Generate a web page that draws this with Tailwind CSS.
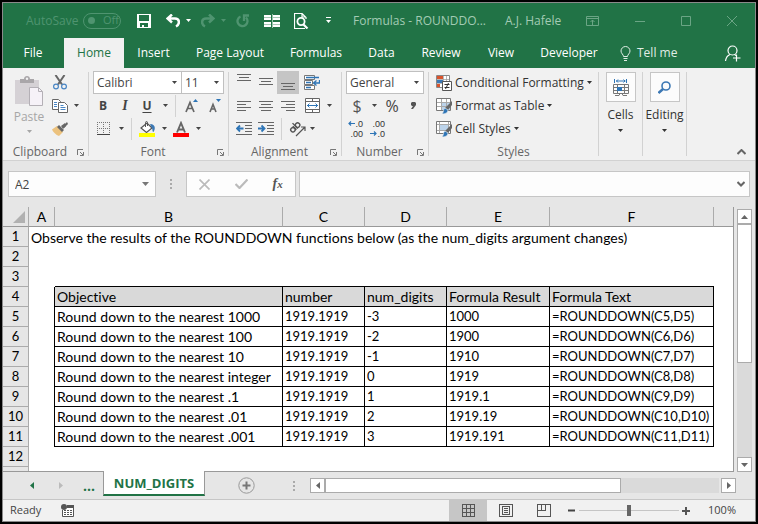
<!DOCTYPE html>
<html lang="en">
<head>
<meta charset="utf-8">
<meta name="viewport" content="width=device-width, initial-scale=1">
<title>Formulas - ROUNDDOWN</title>
<script src="https://cdn.jsdelivr.net/npm/@tailwindcss/browser@4"></script>
</head>
<body class="bg-black font-['Open_Sans','Noto_Sans',sans-serif] text-xs text-[#444]">
<svg class="hidden" aria-hidden="true">
  <symbol id="caret" viewBox="0 0 5 3"><path d="M0 0h5L2.500 3z" fill="currentColor"/></symbol>
  <symbol id="launch" viewBox="0 0 7 7"><path d="M.5 6V.5H6M3 3l3 3M6.500 3v3.500H3" fill="none" stroke="#777"/></symbol>
  <symbol id="tablebrush" viewBox="0 0 16 16">
    <path d="M.5.5h14v12H.5z" fill="#fff" stroke="#777"/><path d="M5 4h9v8H5z" fill="#bcd3ea"/>
    <path d="M1 4.500h13M1 8.500h13M5.500 1v11M10.500 1v11" stroke="#a8a8a8"/>
    <path d="M16 3v4l-4 5-3-2z" fill="#666"/><path d="M9 10l3 2c0 3-3 4-6 4 2-2 1-5 3-6z" fill="#2e75b6" stroke="#f1f1f1" stroke-width=".6"/>
  </symbol>
  <symbol id="cellbrush" viewBox="0 0 16 16">
    <path d="M.5.5h14v12H.5z" fill="#fff" stroke="#777"/><path d="M4 4h8v5H4z" fill="#bcd3ea"/>
    <path d="M1 3.500h13M1 9.500h13M3.500 1v11M12.500 1v11" stroke="#a8a8a8"/>
    <path d="M16 3v4l-4 5-3-2z" fill="#666"/><path d="M9 10l3 2c0 3-3 4-6 4 2-2 1-5 3-6z" fill="#2e75b6" stroke="#f1f1f1" stroke-width=".6"/>
  </symbol>
</svg>

<div class="flex min-h-screen flex-col border-2 border-black">
<div class="flex flex-1 flex-col border border-[#8a8a8a]">

<header class="bg-[#217346] text-white">
  <div class="flex h-[35px] items-center pr-[18px] pl-[23px]">
    <label for="autosave" class="w-[57px] text-[#4f9470]">AutoSave</label>
    <button id="autosave" type="button" class="flex h-4 w-[38px] items-center gap-2 rounded-full border border-[#4f9470] pl-1 text-[11px] text-[#4f9470]"><span class="size-[7px] rounded-full bg-[#4f9470]"></span>Off</button>
    <button type="button" aria-label="Save" class="ml-4"><svg class="block h-[14px] w-[14px]" viewBox="0 0 14 14"><path d="M0 0h14v14H0zM2 1v6h10V1zM3 9v4h2v-2h2v2h4V9z" fill="#fff" fill-rule="evenodd"/></svg></button>
    <button type="button" aria-label="Undo" class="ml-[15px]"><svg class="block h-[14px] w-[14px]" viewBox="0 0 14 14"><path d="M6 .5L1.500 4.500 6 8.500M2 4.500h7c5 0 5 6 1 8" fill="none" stroke="#fff" stroke-width="2.500"/></svg></button>
    <button type="button" aria-label="Undo list" class="ml-[6px]"><svg class="block h-[3px] w-[5px]"><use href="#caret"/></svg></button>
    <button type="button" aria-label="Redo" class="ml-[10px] text-[#4f9470]"><svg class="block h-[14px] w-[14px]" viewBox="0 0 14 14"><path d="M8 .5l4.500 4L8 8.500M12 4.500H5c-5 0-5 6-1 8" fill="none" stroke="currentColor" stroke-width="2.500"/></svg></button>
    <button type="button" aria-label="Redo list" class="ml-[6px] text-[#4f9470]"><svg class="block h-[3px] w-[5px]"><use href="#caret"/></svg></button>
    <button type="button" aria-label="Repeat" class="ml-[10px] text-[#4f9470]"><svg class="block h-[14px] w-[14px]" viewBox="0 0 14 14"><path d="M4.500 2.500a5 5 0 1 0 5.500 1M8 7V1.500h5" fill="none" stroke="currentColor" stroke-width="2.300"/></svg></button>
    <button type="button" aria-label="Freeze panes" class="ml-[14px]"><svg class="block h-[14px] w-4" viewBox="0 0 16 14" shape-rendering="crispEdges"><path d="M0 1h7v5H0zM9 1h7v5H9zM0 8h7v5H0zM9 8h7v5H9z" fill="#fff"/><path d="M0 3.500h16M0 10.500h16" stroke="#217346" stroke-width=".4"/><path d="M8 0v14" stroke="#9cc5ad"/></svg></button>
    <button type="button" aria-label="Print preview" class="ml-[14px]"><svg class="block h-4 w-[15px]" viewBox="0 0 15 16"><path d="M11 15.500H.5V.5H8l4 4V6M8 .5V4h4" fill="none" stroke="#fff" stroke-width="1.200"/><circle cx="7" cy="8.500" r="3.600" fill="#217346" stroke="#fff" stroke-width="1.800"/><path d="M9.500 11.500l4 4" stroke="#fff" stroke-width="2.200"/></svg></button>
    <button type="button" aria-label="Customize toolbar" class="ml-[17px]"><svg class="block h-[7px] w-[5px]" viewBox="0 0 5 7"><path d="M0 0h5v1H0zM0 3h5L2.500 6z" fill="#fff"/></svg></button>
    <h1 class="ml-[22px] min-w-[152px] flex-1 whitespace-nowrap text-[#a3cbb4]">Formulas - ROUNDDO...</h1>
    <button type="button" class="w-[81px] text-left whitespace-nowrap text-[#a3cbb4]">A.J. Hafele</button>
    <div class="flex items-center gap-9 text-[#6ba585]">
      <button type="button" aria-label="Ribbon display options"><svg class="block h-[10px] w-[13px]" viewBox="0 0 13 10" fill="none" stroke="currentColor"><path d="M.5.5h12v9H.5zM1 2.500h11M6.500 9V4M4.500 6l2-2 2 2"/></svg></button>
      <button type="button" aria-label="Minimize"><svg class="block size-[10px]" viewBox="0 0 10 10"><path d="M0 5.500h10" stroke="currentColor"/></svg></button>
      <button type="button" aria-label="Maximize"><svg class="block size-[10px]" viewBox="0 0 10 10"><path d="M.5.5h9v9h-9z" fill="none" stroke="currentColor"/></svg></button>
      <button type="button" aria-label="Close"><svg class="block size-[10px]" viewBox="0 0 10 10"><path d="M0 0l10 10M10 0L0 10" stroke="currentColor"/></svg></button>
    </div>
  </div>
  <nav class="flex h-[30px] items-stretch whitespace-nowrap">
    <button type="button" class="w-[60px]">File</button>
    <button type="button" class="ml-px w-[60px] bg-[#f1f1f1] text-[#217346]">Home</button>
    <button type="button" class="w-[59px]">Insert</button>
    <button type="button" class="w-[94px]">Page Layout</button>
    <button type="button" class="w-[78px]">Formulas</button>
    <button type="button" class="w-[53px]">Data</button>
    <button type="button" class="w-[66px]">Review</button>
    <button type="button" class="w-[54px]">View</button>
    <button type="button" class="w-[82px]">Developer</button>
    <button type="button" class="flex items-center gap-[6px] pl-[10px] text-[#e0ede5]"><svg class="h-[15px] w-[11px]" viewBox="0 0 11 15" fill="none" stroke="currentColor"><path d="M3.500 10.500c0-2-2.500-3-2.500-5.500a4.500 4.500 0 0 1 9 0c0 2.500-2.500 3.500-2.500 5.500zM3.500 12.500h4M4 14.500h3"/></svg>Tell me</button>
    <button type="button" aria-label="Share" class="ml-auto pr-[14px]"><svg class="h-[17px] w-4" viewBox="0 0 16 17" fill="none" stroke="#fff" stroke-width="1.200"><circle cx="7.500" cy="5.500" r="4.500"/><path d="M.5 16c.5-4 2-5.500 4.500-6.500M9.500 9.500l1.500 1M11.500 9.500v7M8 13h7.500"/></svg></button>
  </nav>
</header>

<section aria-label="Ribbon" class="flex h-[93px] border-b border-[#d2d2d2] bg-[#f1f1f1] pt-[3px]">
  <div class="flex w-[85px] flex-col">
    <div class="flex h-[69px]">
      <button type="button" class="ml-[11px] flex w-[30px] flex-col items-center pt-[5px] text-[#a6a6a6]">
        <svg class="h-[30px] w-7" viewBox="0 0 28 30"><path d="M0 4h24v24H0z" fill="#d5d1d5"/><path d="M5 7V3h4c0-4 6-4 6 0h4v4z" fill="#a9a6a9"/><circle cx="12" cy="2.800" r="1.200" fill="#f1f1f1"/><path d="M14.500 11.500h9l4 4v14h-13z" fill="#f6f2f8" stroke="#b4b0b6"/><path d="M23.500 11.500v4h4" fill="none" stroke="#b4b0b6"/></svg>
        <span class="mt-[2px] leading-[18px]">Paste</span>
        <svg class="mt-1 h-[3px] w-[5px]"><use href="#caret"/></svg>
      </button>
      <div class="ml-[5px] flex flex-col">
        <button type="button" aria-label="Cut" class="flex h-[23px] w-[22px] items-center justify-center"><svg class="h-[15px] w-[14px]" viewBox="0 0 14 15" fill="none"><path d="M2.500 0L9 9.500M11.500 0L5 9.500" stroke="#666" stroke-width="2"/><circle cx="3" cy="11.500" r="2.400" stroke="#4a86c4" stroke-width="1.200"/><circle cx="11" cy="11.500" r="2.400" stroke="#4a86c4" stroke-width="1.200"/></svg></button>
        <div class="flex h-[23px] items-center">
          <button type="button" aria-label="Copy" class="flex w-[22px] justify-center"><svg class="h-[14px] w-4" viewBox="0 0 16 14" fill="#fff" stroke="#666"><path d="M.5.5h6l2 2v8h-8z"/><path d="M2 3.500h3M2 5.500h3M2 7.500h3" stroke="#4a86c4"/><path d="M6.500 3.500h6l3 3v7h-9z"/><path d="M8.500 6.500h3M8.500 8.500h5M8.500 10.500h5" stroke="#4a86c4"/></svg></button>
          <button type="button" aria-label="Copy options" class="ml-[3px]"><svg class="block h-[3px] w-[5px]"><use href="#caret"/></svg></button>
        </div>
        <button type="button" aria-label="Format painter" class="flex h-[23px] w-[22px] items-center justify-center"><svg class="h-[14px] w-4" viewBox="0 0 16 14"><path d="M5 4l6 6-4 4C4 13 1 10 0 7.500z" fill="#ecc27e"/><path d="M7 3l5 5-2 2-5-5zM11 4l4-4 1 2-4 4z" fill="#666"/><path d="M9 4l4-3 1 3-3 3z" fill="#666"/></svg></button>
      </div>
    </div>
    <div class="flex h-[20px] items-center pt-1"><span class="flex-1 text-center text-[#666]">Clipboard</span><button type="button" aria-label="Clipboard settings" class="w-[11px]"><svg class="block size-[7px]"><use href="#launch"/></svg></button></div>
  </div>

  <div class="my-[1px] mb-1 w-px bg-[#d2d2d2]"></div>
  <div class="flex w-[139px] flex-col">
    <div class="flex h-[23px] px-1">
      <div class="relative w-[89px]"><select aria-label="Font" class="h-full w-full appearance-none border border-[#c0c0c0] bg-white pl-[3px]"><option>Calibri</option></select><svg class="pointer-events-none absolute top-[10px] right-[5px] h-[3px] w-[5px]"><use href="#caret"/></svg></div>
      <div class="relative -ml-px w-[43px]"><select aria-label="Font size" class="h-full w-full appearance-none border border-[#c0c0c0] bg-white pl-[3px]"><option>11</option></select><svg class="pointer-events-none absolute top-[10px] right-[5px] h-[3px] w-[5px]"><use href="#caret"/></svg></div>
    </div>
    <div class="flex h-[23px] items-center pl-[3px]">
      <button type="button" class="w-[22px] font-bold">B</button>
      <button type="button" class="w-[22px] font-['Liberation_Serif',serif] text-sm font-bold italic">I</button>
      <button type="button" class="w-[22px] font-bold underline underline-offset-2">U</button>
      <button type="button" aria-label="Underline options" class="flex w-[14px] justify-center"><svg class="h-[3px] w-[5px]"><use href="#caret"/></svg></button>
      <div class="mx-[3px] h-[22px] w-px bg-[#d2d2d2]"></div>
      <button type="button" aria-label="Increase font size" class="flex w-[26px] justify-center"><svg class="h-[14px] w-[14px]" viewBox="0 0 14 14"><path d="M1 13L5 3.500 9 13M2.500 9.500h5" fill="none" stroke="#666" stroke-width="1.700"/><path d="M8 3h5L10.500 0z" fill="#2e75b6"/></svg></button>
      <button type="button" aria-label="Decrease font size" class="flex w-[20px] justify-center"><svg class="h-[14px] w-[14px]" viewBox="0 0 14 14"><path d="M2 13l3-7.500L8 13M3 10h4" fill="none" stroke="#666" stroke-width="1.600"/><path d="M8 0h5l-2.500 3z" fill="#2e75b6"/></svg></button>
    </div>
    <div class="flex h-[23px] items-center pl-[3px]">
      <button type="button" aria-label="Borders" class="flex w-[22px] justify-center"><svg class="h-[13px] w-[13px]" viewBox="0 0 13 13" shape-rendering="crispEdges"><path d="M0 .5h13M0 6.500h13M.5 0v12M6.500 0v12M12.500 0v12" fill="none" stroke="#777" stroke-dasharray="1 1"/><path d="M0 12.500h13" stroke="#444"/></svg></button>
      <button type="button" aria-label="Border options" class="flex w-[14px] justify-center"><svg class="h-[3px] w-[5px]"><use href="#caret"/></svg></button>
      <div class="mr-1 ml-[3px] h-[22px] w-px bg-[#d2d2d2]"></div>
      <button type="button" aria-label="Fill color" class="flex w-[22px] justify-center"><svg class="h-4 w-4" viewBox="0 0 16 16"><path d="M2 7l6-5 5 5-5.500 4.500z" fill="#fff" stroke="#555" stroke-width="1.200"/><path d="M6.500 6V1.500c0-1.300 2-1.300 2 0V5" fill="none" stroke="#555"/><path d="M11 3c5 0 6 4 3.500 8-1.500 0-.5-3-2-4.500z" fill="#3c78b4"/><path d="M0 12h16v4H0z" fill="#ff0"/></svg></button>
      <button type="button" aria-label="Fill options" class="flex w-[12px] justify-center"><svg class="h-[3px] w-[5px]"><use href="#caret"/></svg></button>
      <button type="button" aria-label="Font color" class="flex w-[22px] justify-center"><svg class="h-4 w-4" viewBox="0 0 16 16"><path d="M4 11.500L8 2l4 9.500M5.500 8.500h5" fill="none" stroke="#666" stroke-width="1.900"/><path d="M0 12h16v4H0z" fill="red"/></svg></button>
      <button type="button" aria-label="Font color options" class="flex w-[12px] justify-center"><svg class="h-[3px] w-[5px]"><use href="#caret"/></svg></button>
    </div>
    <div class="flex h-[20px] items-center pt-1"><span class="flex-1 text-center text-[#666]">Font</span><button type="button" aria-label="Font settings" class="w-[11px]"><svg class="block size-[7px]"><use href="#launch"/></svg></button></div>
  </div>

  <div class="my-[1px] mb-1 w-px bg-[#d2d2d2]"></div>
  <div class="flex w-[112px] flex-col">
    <div class="flex h-[23px] items-stretch pl-1">
      <button type="button" aria-label="Top align" class="flex w-[22px] justify-center pt-[3px]"><svg class="h-[15px] w-[14px]" viewBox="0 0 14 15" stroke="#666" shape-rendering="crispEdges"><path d="M0 .5h14M2 3.500h10M0 6.500h14"/></svg></button>
      <button type="button" aria-label="Middle align" class="flex w-[22px] justify-center pt-[3px]"><svg class="h-[15px] w-[14px]" viewBox="0 0 14 15" stroke="#666" shape-rendering="crispEdges"><path d="M0 4.500h14M2 7.500h10M0 10.500h14"/></svg></button>
      <button type="button" aria-label="Bottom align" class="flex w-[22px] justify-center bg-[#c5c5c5] pt-[4px]"><svg class="h-[16px] w-[14px]" viewBox="0 0 14 16" stroke="#666" shape-rendering="crispEdges"><path d="M0 8.500h14M2 11.500h10M0 14.500h14"/></svg></button>
      <button type="button" aria-label="Wrap text" class="ml-[2px] flex w-[22px] items-center justify-center"><svg class="h-[15px] w-4" viewBox="0 0 16 15" fill="none"><path d="M.5.5h10v4H.5zM.5 5.500h8v4h-8zM.5 10.500h10v4H.5z" fill="#fff" stroke="#777"/><path d="M2 2.500h13M2 7.500h5M2 12.500h5M15.500 5v3h-5M12.500 5.500l-3 2.500 3 2.500" stroke="#2e75b6" stroke-width="1.300"/></svg></button>
    </div>
    <div class="flex h-[23px] items-center pl-1">
      <button type="button" aria-label="Align left" class="flex w-[22px] justify-center"><svg class="h-[10px] w-[14px]" viewBox="0 0 14 10" stroke="#666" shape-rendering="crispEdges"><path d="M0 .5h14M0 3.500h9M0 6.500h14M0 9.500h9"/></svg></button>
      <button type="button" aria-label="Center" class="flex w-[22px] justify-center"><svg class="h-[10px] w-[14px]" viewBox="0 0 14 10" stroke="#666" shape-rendering="crispEdges"><path d="M0 .5h14M2 3.500h10M0 6.500h14M2 9.500h10"/></svg></button>
      <button type="button" aria-label="Align right" class="flex w-[22px] justify-center"><svg class="h-[10px] w-[14px]" viewBox="0 0 14 10" stroke="#666" shape-rendering="crispEdges"><path d="M0 .5h14M5 3.500h9M0 6.500h14M5 9.500h9"/></svg></button>
      <button type="button" aria-label="Merge and center" class="ml-[2px] flex w-[22px] justify-center"><svg class="h-[15px] w-[15px]" viewBox="0 0 15 15" fill="none"><path d="M.5.5h14v14H.5zM.5 3.500h14M.5 11.500h14M7.500.5v3M7.500 11.500v3" fill="#fff" stroke="#666"/><path d="M2 7.500h11M4.500 5.500l-2 2 2 2M10.500 5.500l2 2-2 2" stroke="#2e75b6"/></svg></button>
      <button type="button" aria-label="Merge options" class="flex w-[12px] justify-center"><svg class="h-[3px] w-[5px]"><use href="#caret"/></svg></button>
    </div>
    <div class="flex h-[23px] items-center pl-1">
      <button type="button" aria-label="Decrease indent" class="flex w-[22px] justify-center"><svg class="h-[13px] w-4" viewBox="0 0 16 13"><path d="M0 .5h16M9 3.500h7M9 6.500h7M9 9.500h7M0 12.500h16" stroke="#666" shape-rendering="crispEdges"/><path d="M7.500 6.500H1M4 3.500l-3 3 3 3" fill="none" stroke="#2e75b6" stroke-width="1.800"/></svg></button>
      <button type="button" aria-label="Increase indent" class="flex w-[22px] justify-center"><svg class="h-[13px] w-4" viewBox="0 0 16 13"><path d="M0 .5h16M9 3.500h7M9 6.500h7M9 9.500h7M0 12.500h16" stroke="#666" shape-rendering="crispEdges"/><path d="M0 6.500h6.500M3.500 3.500l3 3-3 3" fill="none" stroke="#2e75b6" stroke-width="1.800"/></svg></button>
      <div class="mx-1 h-[22px] w-px bg-[#d2d2d2]"></div>
      <button type="button" aria-label="Orientation" class="flex w-[22px] justify-center"><svg class="h-4 w-[17px]" viewBox="0 0 17 16"><g fill="none" stroke="#555" stroke-width="1.400"><g transform="rotate(-45 5 7)"><circle cx="3" cy="7.500" r="2.200"/><path d="M5.400 5v5M7.400 2.500V10"/><circle cx="9.600" cy="7.500" r="2.200"/></g><path d="M7 15L15.500 6.500M12 6h4v4" stroke-width="1.200"/></g></svg></button>
      <button type="button" aria-label="Orientation options" class="flex w-[8px] justify-center"><svg class="h-[3px] w-[5px]"><use href="#caret"/></svg></button>
    </div>
    <div class="flex h-[20px] items-center pt-1"><span class="flex-1 text-center text-[#666]">Alignment</span><button type="button" aria-label="Alignment settings" class="w-[11px]"><svg class="block size-[7px]"><use href="#launch"/></svg></button></div>
  </div>

  <div class="my-[1px] mb-1 w-px bg-[#d2d2d2]"></div>
  <div class="flex w-[86px] flex-col">
    <div class="relative mx-1 h-[23px]"><select aria-label="Number format" class="h-full w-full appearance-none border border-[#c0c0c0] bg-white pl-[3px]"><option>General</option></select><svg class="pointer-events-none absolute top-[10px] right-[5px] h-[3px] w-[5px]"><use href="#caret"/></svg></div>
    <div class="flex h-[23px] items-center pl-1">
      <button type="button" class="w-[22px] text-base leading-4 text-[#555]">$</button>
      <button type="button" aria-label="Currency options" class="flex w-[12px] justify-center"><svg class="h-[3px] w-[5px]"><use href="#caret"/></svg></button>
      <button type="button" class="w-[24px] text-base leading-4">%</button>
      <button type="button" aria-label="Comma style" class="flex w-[18px] justify-center"><svg class="h-[7px] w-[5px]" viewBox="0 0 5 7"><path d="M1 0h3l1 1v2L2 7H0l2-3H1L0 3V1z" fill="#555"/></svg></button>
    </div>
    <div class="flex h-[23px] items-center pl-[3px] font-['Liberation_Sans',sans-serif] text-[9px] leading-[10px] text-[#333]">
      <button type="button" aria-label="Increase decimal" class="flex w-[22px] flex-col items-end pr-1"><span class="flex items-center"><svg class="h-[5px] w-[7px]" viewBox="0 0 7 5"><path d="M7 2.500H1M3 .5l-2 2 2 2" fill="none" stroke="#2e75b6" stroke-width="1.200"/></svg>.0</span><span>.00</span></button>
      <button type="button" aria-label="Decrease decimal" class="flex w-[22px] flex-col items-end pr-1"><span>.00</span><span class="flex items-center"><svg class="h-[5px] w-[7px]" viewBox="0 0 7 5"><path d="M0 2.500h6M4 .5l2 2-2 2" fill="none" stroke="#2e75b6" stroke-width="1.200"/></svg>.0</span></button>
    </div>
    <div class="flex h-[20px] items-center pt-1"><span class="flex-1 text-center text-[#666]">Number</span><button type="button" aria-label="Number settings" class="w-[11px]"><svg class="block size-[7px]"><use href="#launch"/></svg></button></div>
  </div>

  <div class="my-[1px] mb-1 w-px bg-[#d2d2d2]"></div>
  <div class="flex w-[169px] flex-col whitespace-nowrap">
    <button type="button" class="flex h-[23px] items-center gap-[3px] pl-[7px] text-[#333]"><svg class="size-4" viewBox="0 0 16 16"><path d="M.5.5h13v12H.5z" fill="#fff" stroke="#888"/><path d="M1 1h6v3H1zM1 9h3v3H1z" fill="#d9532c"/><path d="M1 5h6v3H1z" fill="#3c78b4"/><path d="M1 4.500h12M1 8.500h12M7.500 1v11M10.500 1v11" stroke="#999" stroke-width=".7"/><path d="M6.500 6.500h9v9h-9z" fill="#fff" stroke="#555"/><path d="M8.500 9.500h5M8.500 12.500h5M12.500 8l-3 6" stroke="#333"/></svg>Conditional Formatting<svg class="h-[3px] w-[5px]"><use href="#caret"/></svg></button>
    <button type="button" class="flex h-[23px] items-center gap-[3px] pl-[7px] text-[#333]"><svg class="size-4"><use href="#tablebrush"/></svg>Format as Table<svg class="h-[3px] w-[5px]"><use href="#caret"/></svg></button>
    <button type="button" class="flex h-[23px] items-center gap-[3px] pl-[7px] text-[#333]"><svg class="size-4"><use href="#cellbrush"/></svg>Cell Styles<svg class="h-[3px] w-[5px]"><use href="#caret"/></svg></button>
    <div class="flex h-[20px] items-center justify-center pt-1 text-[#666]">Styles</div>
  </div>

  <div class="my-[1px] mb-1 w-px bg-[#d2d2d2]"></div>
  <button type="button" class="flex w-[43px] flex-col items-center pt-px text-[#333]">
    <span class="flex size-[30px] items-center justify-center border border-[#c6c6c6] bg-[#fcfcfc]"><svg class="h-[17px] w-4" viewBox="0 0 16 17" fill="none"><path d="M.5 5.500h15v9H.5zM1 8.500h14M1 11.500h14M4.500 6v8M11.500 6v8M2 16.500h4l1-2h2l1 2h4" stroke="#777"/><path d="M1.500 0v4M13.500 0v4M3 2h9.500M5 .5L3.500 2 5 3.500M10.500.5L12 2l-1.500 1.500" stroke="#2e75b6"/><path d="M4 8h5v4H4z" fill="#2e75b6"/></svg></span>
    <span class="mt-[4px] leading-[18px]">Cells</span>
    <svg class="mt-[5px] h-[3px] w-[5px]"><use href="#caret"/></svg>
  </button>
  <div class="my-[1px] mb-1 w-px bg-[#d2d2d2]"></div>
  <button type="button" class="flex w-[43px] flex-col items-center pt-px text-[#333]">
    <span class="flex size-[30px] items-center justify-center border border-[#c6c6c6] bg-[#fcfcfc]"><svg class="size-[13px]" viewBox="0 0 13 13" fill="none" stroke="#3c78b4"><circle cx="8" cy="5" r="4" stroke-width="1.600"/><path d="M5 8l-4.500 4" stroke-width="2.500"/></svg></span>
    <span class="mt-[4px] leading-[18px]">Editing</span>
    <svg class="mt-[5px] h-[3px] w-[5px]"><use href="#caret"/></svg>
  </button>
  <div class="my-[1px] mb-1 w-px bg-[#d2d2d2]"></div>
  <button type="button" aria-label="Collapse ribbon" class="mb-[5px] ml-auto self-end pr-[9px]"><svg class="block h-[6px] w-[9px]" viewBox="0 0 9 6"><path d="M.5 5l4-4 4 4" fill="none" stroke="#666" stroke-width="2"/></svg></button>
</section>

<section aria-label="Formula bar" class="flex h-[46px] items-start bg-[#e6e6e6] px-[5px] pt-[10px]">
  <div class="flex h-[26px] w-[148px] items-center border border-[#c6c6c6] bg-[#fdfdfd]">
    <input aria-label="Name box" value="A2" class="h-full min-w-0 flex-1 pl-[6px] outline-none">
    <button type="button" aria-label="Name list" class="pr-[6px]"><svg class="block h-1 w-[7px]" viewBox="0 0 7 4"><path d="M0 0h7L3.500 4z" fill="#777"/></svg></button>
  </div>
  <div class="ml-[14px] flex h-[26px] w-[2px] flex-col items-center justify-center gap-[2px]"><i class="size-[2px] bg-[#aaa]"></i><i class="size-[2px] bg-[#aaa]"></i><i class="size-[2px] bg-[#aaa]"></i></div>
  <div class="ml-[14px] flex h-[26px] w-[110px] items-center justify-around border border-[#c6c6c6] bg-[#fdfdfd]">
    <button type="button" aria-label="Cancel"><svg class="size-[11px]" viewBox="0 0 11 11"><path d="M.5.5l10 10M10.500.5l-10 10" stroke="#bbb" stroke-width="1.700"/></svg></button>
    <button type="button" aria-label="Enter"><svg class="h-[10px] w-[13px]" viewBox="0 0 13 10"><path d="M.5 5l4 4L12.500.5" fill="none" stroke="#bbb" stroke-width="2.200"/></svg></button>
    <button type="button" class="font-['Liberation_Serif',serif] text-sm leading-4 font-bold text-[#555] italic">f<span class="text-[11px]">x</span></button>
  </div>
  <div class="ml-[3px] flex h-[26px] flex-1 items-center border border-[#c6c6c6] bg-[#fdfdfd]">
    <input aria-label="Formula" class="h-full min-w-0 flex-1 px-2 outline-none">
    <button type="button" aria-label="Expand formula bar" class="pr-1"><svg class="block h-[6px] w-2" viewBox="0 0 8 6"><path d="M.5 1L4 4.500 7.500 1" fill="none" stroke="#666" stroke-width="2"/></svg></button>
  </div>
</section>

<main class="flex flex-1 bg-[#e6e6e6]">
  <div class="min-w-0 flex-1 border-r border-b border-[#999] bg-white">
  <table class="w-full table-fixed border-separate border-spacing-0 font-['Lato',sans-serif] text-sm leading-[19px] whitespace-nowrap text-black [font-variant-ligatures:none] [&_tbody_td]:h-5 [&_tbody_td]:pl-[2px] [&_tbody_th]:border-r [&_tbody_th]:border-b [&_tbody_th]:border-[#ababab] [&_tbody_th]:bg-[#e6e6e6] [&_tbody_th]:text-[13px] [&_tbody_th]:font-normal [&_thead_th]:border-r [&_thead_th]:border-b [&_thead_th]:border-[#ababab] [&_thead_th]:border-b-[#999] [&_thead_th]:bg-[#e6e6e6] [&_thead_th]:font-normal">
    <colgroup><col class="w-[26px]"><col class="w-[26px]"><col class="w-[228px]"><col class="w-[82px]"><col class="w-[82px]"><col class="w-[103px]"><col class="w-[164px]"><col></colgroup>
    <thead><tr class="h-5"><th aria-label="Select all"><svg class="ml-auto mr-[3px] h-3 w-3" viewBox="0 0 12 12"><path d="M12 0v12H0z" fill="#b1b1b1"/></svg></th><th>A</th><th>B</th><th>C</th><th>D</th><th>E</th><th>F</th><th class="border-r-0!"></th></tr></thead>
    <tbody>
      <tr class="h-5"><th>1</th><td colspan="7">Observe the results of the ROUNDDOWN functions below (as the num_digits argument changes)</td></tr>
      <tr class="h-5"><th>2</th><td colspan="7"></td></tr>
      <tr class="h-5"><th>3</th><td></td><td colspan="5" class="border-b border-black"></td><td></td></tr>
      <tr class="h-5 [&>td:nth-child(n+3):nth-child(-n+7)]:border-b [&>td:nth-child(n+3):nth-child(-n+7)]:bg-[#d9d9d9] [&>td:nth-child(n+2):nth-child(-n+7)]:border-r"><th>4</th><td></td><td>Objective</td><td>number</td><td>num_digits</td><td>Formula Result</td><td>Formula Text</td><td></td></tr>
    </tbody>
    <tbody class="[&_td:nth-child(n+2):nth-child(-n+7)]:border-r [&_td:nth-child(n+3):nth-child(-n+7)]:border-b [&_td:nth-child(n+4)]:text-[13px]">
      <tr class="h-5"><th>5</th><td></td><td>Round down to the nearest 1000</td><td>1919.1919</td><td>-3</td><td>1000</td><td>=ROUNDDOWN(C5,D5)</td><td></td></tr>
      <tr class="h-5"><th>6</th><td></td><td>Round down to the nearest 100</td><td>1919.1919</td><td>-2</td><td>1900</td><td>=ROUNDDOWN(C6,D6)</td><td></td></tr>
      <tr class="h-5"><th>7</th><td></td><td>Round down to the nearest 10</td><td>1919.1919</td><td>-1</td><td>1910</td><td>=ROUNDDOWN(C7,D7)</td><td></td></tr>
      <tr class="h-5"><th>8</th><td></td><td>Round down to the nearest integer</td><td>1919.1919</td><td>0</td><td>1919</td><td>=ROUNDDOWN(C8,D8)</td><td></td></tr>
      <tr class="h-5"><th>9</th><td></td><td>Round down to the nearest .1</td><td>1919.1919</td><td>1</td><td>1919.1</td><td>=ROUNDDOWN(C9,D9)</td><td></td></tr>
      <tr class="h-5"><th>10</th><td></td><td>Round down to the nearest .01</td><td>1919.1919</td><td>2</td><td>1919.19</td><td>=ROUNDDOWN(C10,D10)</td><td></td></tr>
      <tr class="h-5"><th>11</th><td></td><td>Round down to the nearest .001</td><td>1919.1919</td><td>3</td><td>1919.191</td><td>=ROUNDDOWN(C11,D11)</td><td></td></tr>
    </tbody>
    <tbody><tr class="h-5"><th>12</th><td colspan="7"></td></tr></tbody>
  </table>
  <div class="h-1 w-[26px] border-r border-[#ababab] bg-[#e6e6e6]"></div>
  </div>
  <div class="flex w-[21px] flex-col items-start pt-[2px] pl-[3px]">
    <button type="button" aria-label="Scroll up" class="flex size-[15px] items-center justify-center border border-[#ababab] bg-white"><svg class="h-1 w-[7px]" viewBox="0 0 7 4"><path d="M0 4h7L3.500 0z" fill="#666"/></svg></button>
    <div class="w-[15px] flex-1 bg-[#dadada]"><div class="h-[139px] border border-[#ababab] bg-white"></div></div>
    <button type="button" aria-label="Scroll down" class="flex size-[15px] items-center justify-center border border-[#ababab] bg-white"><svg class="h-1 w-[7px]" viewBox="0 0 7 4"><path d="M0 0h7L3.500 4z" fill="#666"/></svg></button>
  </div>
</main>

<div class="flex h-[27px] bg-[#e6e6e6] pr-[19px] pl-[27px]">
  <button type="button" aria-label="Previous sheet"><svg class="h-[7px] w-1" viewBox="0 0 4 7"><path d="M4 0v7L0 3.500z" fill="#217346"/></svg></button>
  <button type="button" aria-label="Next sheet" class="ml-[25px]"><svg class="h-[7px] w-1" viewBox="0 0 4 7"><path d="M0 0v7l4-3.500z" fill="#bbb"/></svg></button>
  <button type="button" class="ml-5 w-[20px] text-left text-sm leading-4 font-bold text-[#217346]">...</button>
  <button type="button" class="relative -mt-px mb-[3px] w-[102px] border-x border-b-2 border-x-[#999] border-b-[#217346] bg-white pt-[2px] text-[13px] font-bold text-[#217346]">NUM_DIGITS</button>
  <button type="button" aria-label="New sheet" class="ml-[33px]"><svg class="size-[17px]" viewBox="0 0 17 17" fill="none" stroke="#777"><circle cx="8.500" cy="8.500" r="7.700" stroke="#999"/><path d="M8.500 4.500v8M4.500 8.500h8" stroke-width="2"/></svg></button>
  <div class="ml-[38px] flex w-[2px] flex-col justify-center gap-[2px]"><i class="size-[2px] bg-[#aaa]"></i><i class="size-[2px] bg-[#aaa]"></i><i class="size-[2px] bg-[#aaa]"></i></div>
  <div class="mt-[6px] ml-[15px] flex h-[15px] flex-1">
    <button type="button" aria-label="Scroll left" class="flex size-[15px] items-center justify-center border border-[#ababab] bg-white"><svg class="h-[7px] w-1" viewBox="0 0 4 7"><path d="M4 0v7L0 3.500z" fill="#666"/></svg></button>
    <div class="mr-[2px] flex-1 bg-[#dadada]"><div class="h-full w-3/4 border border-[#ababab] bg-white"></div></div>
    <button type="button" aria-label="Scroll right" class="flex size-[15px] items-center justify-center border border-[#ababab] bg-white"><svg class="h-[7px] w-1" viewBox="0 0 4 7"><path d="M0 0v7l4-3.500z" fill="#666"/></svg></button>
  </div>
</div>

<footer class="flex h-[22px] items-center border-t border-[#c6c6c6] bg-[#f1f1f1] pr-[19px] pl-[7px] text-[11px]">
  <span class="w-[51px]">Ready</span>
  <button type="button" aria-label="Record macro"><svg class="block h-[13px] w-[13px]" viewBox="0 0 13 13"><path d="M1.500 6v6.500h11v-11H7" fill="#fff" stroke="#555"/><path d="M6 1h7v3H6z" fill="#555"/><circle cx="3" cy="3" r="3" fill="#555"/><path d="M3 6.500h8M3 8.500h8M3 10.500h8" stroke="#555" stroke-dasharray="2 1"/></svg></button>
  <div class="ml-auto flex items-center self-stretch">
    <button type="button" aria-label="Normal view" class="flex h-full w-[38px] items-center justify-center bg-[#c6c6c6]"><svg class="size-[13px]" viewBox="0 0 13 13" fill="none" stroke="#555" shape-rendering="crispEdges"><path d="M.5.5h12v12H.5zM.5 4.500h12M.5 8.500h12M4.500.5v12M8.500.5v12"/></svg></button>
    <button type="button" aria-label="Page layout view" class="flex h-full w-[38px] items-center justify-center"><svg class="h-[13px] w-[14px]" viewBox="0 0 14 13" fill="none" stroke="#555" shape-rendering="crispEdges"><path d="M.5.5h13v12H.5zM3.500 2.500h7v8h-7zM5 4.500h4M5 6.500h4M5 8.500h4"/></svg></button>
    <button type="button" aria-label="Page break view" class="flex h-full w-[38px] items-center justify-center"><svg class="h-[13px] w-[14px]" viewBox="0 0 14 13" fill="none" stroke="#555" shape-rendering="crispEdges"><path d="M.5.5h13v12H.5zM4.500.5v6M.5 6.500h8v-6"/></svg></button>
    <button type="button" aria-label="Zoom out" class="ml-[5px]"><svg class="block size-[7px]" viewBox="0 0 7 7"><path d="M0 3.500h7" stroke="#444" stroke-width="2"/></svg></button>
    <input type="range" aria-label="Zoom" min="0" max="100" value="50" class="ml-1 h-[11px] w-[100px] appearance-none bg-linear-to-b from-transparent from-45% via-[#999] via-45% to-transparent to-55% [&::-webkit-slider-thumb]:h-[11px] [&::-webkit-slider-thumb]:w-1 [&::-webkit-slider-thumb]:appearance-none [&::-webkit-slider-thumb]:bg-[#666]">
    <button type="button" aria-label="Zoom in" class="ml-[3px]"><svg class="block size-2" viewBox="0 0 8 8"><path d="M0 4h8M4 0v8" stroke="#555" stroke-width="2"/></svg></button>
    <button type="button" class="ml-[18px] w-[28px] whitespace-nowrap">100%</button>
  </div>
</footer>
</div>
</div>
</body>
</html>
